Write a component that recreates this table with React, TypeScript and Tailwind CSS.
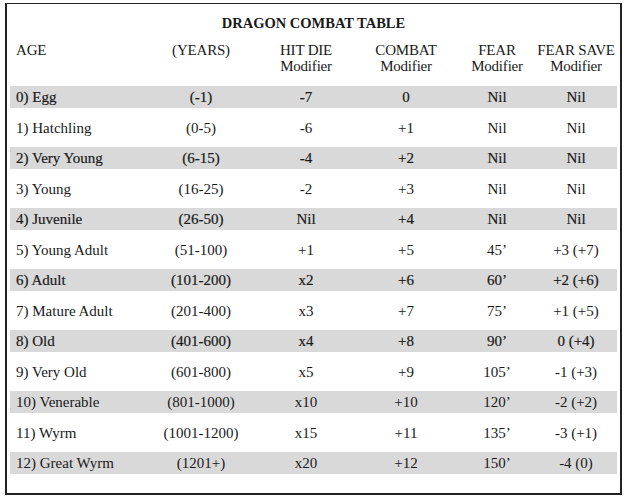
import React from 'react';

const ROWS = [
  ['0) Egg', '(-1)', '-7', '0', 'Nil', 'Nil'],
  ['1) Hatchling', '(0-5)', '-6', '+1', 'Nil', 'Nil'],
  ['2) Very Young', '(6-15)', '-4', '+2', 'Nil', 'Nil'],
  ['3) Young', '(16-25)', '-2', '+3', 'Nil', 'Nil'],
  ['4) Juvenile', '(26-50)', 'Nil', '+4', 'Nil', 'Nil'],
  ['5) Young Adult', '(51-100)', '+1', '+5', '45’', '+3 (+7)'],
  ['6) Adult', '(101-200)', 'x2', '+6', '60’', '+2 (+6)'],
  ['7) Mature Adult', '(201-400)', 'x3', '+7', '75’', '+1 (+5)'],
  ['8) Old', '(401-600)', 'x4', '+8', '90’', '0 (+4)'],
  ['9) Very Old', '(601-800)', 'x5', '+9', '105’', '-1 (+3)'],
  ['10) Venerable', '(801-1000)', 'x10', '+10', '120’', '-2 (+2)'],
  ['11) Wyrm', '(1001-1200)', 'x15', '+11', '135’', '-3 (+1)'],
  ['12) Great Wyrm', '(1201+)', 'x20', '+12', '150’', '-4 (0)'],
];

const COLS = 'grid grid-cols-[134px_114px_96px_104px_78px_80px]';

export default function App() {
  return (
    <div className="w-[628px] h-[502px] bg-white pt-[3px] pl-[5px] pr-[6px] pb-[7px] font-[family-name:Liberation_Serif,serif] text-[15px] text-[#1a1a1a]">
      <div className="h-full border-2 border-t border-[#222] pt-[9px] pl-[3px] pr-[3px]">
        {/* title */}
        <div className="text-center font-bold text-[14.5px] leading-[20px]">DRAGON COMBAT TABLE</div>

        {/* header */}
        <div className={`${COLS} mt-[9px] leading-[16px] whitespace-nowrap tracking-[-0.2px]`}>
          <div className="pl-[6px]">AGE</div>
          <div className="text-center">(YEARS)</div>
          <div className="text-center">HIT DIE<br />Modifier</div>
          <div className="text-center">COMBAT<br />Modifier</div>
          <div className="text-center">FEAR<br />Modifier</div>
          <div className="text-center">FEAR SAVE<br />Modifier</div>
        </div>

        {/* rows */}
        <div className="mt-[8px]">
          {ROWS.map((r, i) => {
            const shaded = i % 2 === 0;
            return (
              <div key={i} className="h-[30.5px] flex items-center">
                <div
                  className={`${COLS} w-full h-[22px] items-center whitespace-nowrap ${
                    shaded ? 'bg-[#d9d9d9]' : ''
                  } ${shaded && i <= 8 ? '[-webkit-text-stroke:0.2px_#1a1a1a]' : ''}`}
                >
                  <div className="pl-[6px]">{r[0]}</div>
                  <div className="text-center">{r[1]}</div>
                  <div className="text-center">{r[2]}</div>
                  <div className="text-center">{r[3]}</div>
                  <div className="text-center">{r[4]}</div>
                  <div className="text-center">{r[5]}</div>
                </div>
              </div>
            );
          })}
        </div>
      </div>
    </div>
  );
}
